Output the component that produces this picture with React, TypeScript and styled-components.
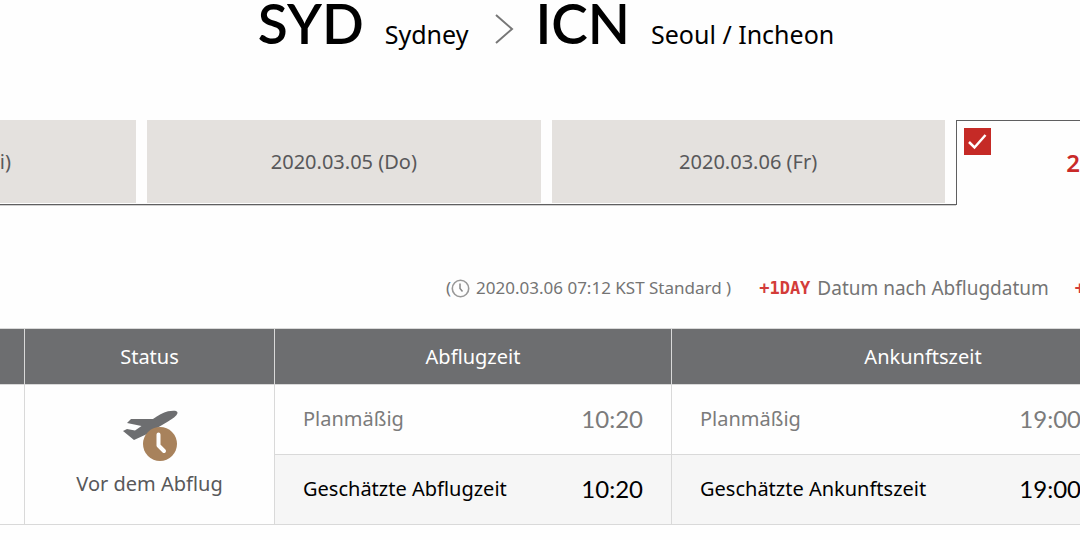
import React from "react";
import styled, { createGlobalStyle } from "styled-components";

const GlobalStyle = createGlobalStyle`
  * { box-sizing: border-box; }
  body {
    margin: 0;
    background: #fefefe;
    color: #000;
    font-family: "Noto Sans", sans-serif;
    font-size: 20px;
    line-height: 28px;
    overflow: hidden;
  }
`;

const Viewport = styled.div`
  overflow: hidden;
`;

const Sheet = styled.main`
  width: calc(100% + 526px);
  margin-left: -257px;
`;

const Route = styled.h1`
  display: flex;
  align-items: baseline;
  justify-content: center;
  margin: 0;
  height: 120px;
  line-height: 46px;
  font-weight: 400;
  white-space: nowrap;
`;

const Code = styled.span`
  font-family: Lato, sans-serif;
  font-size: 55px;
  font-weight: 600;
`;

const City = styled.span`
  margin-left: 21px;
  font-size: 25px;
`;

const Chevron = styled.svg`
  width: 20px;
  height: 30px;
  margin: 0 21px 0 26px;
`;

const Tabs = styled.div`
  display: flex;
  gap: 11px;
  border-bottom: 1px solid #5f5f60;
  box-shadow: 0 1px #d0d0d0;
`;

const Tab = styled.button<{ $active?: boolean }>`
  position: relative;
  flex: 1;
  height: ${(p) => (p.$active ? 85 : 83)}px;
  margin-bottom: ${(p) => (p.$active ? -1 : 1)}px;
  padding: 0;
  border: 1px solid ${(p) => (p.$active ? "#5f5f60" : "#e4e1de")};
  border-bottom: 0;
  background: ${(p) => (p.$active ? "#fefefe" : "#e4e1de")};
  box-shadow: ${(p) => (p.$active ? "0 1px #fefefe" : "none")};
  color: ${(p) => (p.$active ? "#c92a28" : "#58585a")};
  font-family: inherit;
  font-size: ${(p) => (p.$active ? 24 : 20)}px;
  font-weight: ${(p) => (p.$active ? 600 : 400)};
  line-height: 28px;
`;

const Check = styled.svg`
  position: absolute;
  top: 7px;
  left: 7px;
  width: 27px;
  height: 27px;
  background: #c52a26;
`;

const Notes = styled.div`
  display: flex;
  align-items: center;
  justify-content: flex-end;
  margin: 69px 223px 26px 0;
  color: #747474;
  font-size: 19px;
  white-space: nowrap;
`;

const Stamp = styled.span`
  display: flex;
  align-items: center;
  margin-right: 28px;
  font-size: 17px;
`;

const Clock = styled.svg`
  width: 19px;
  height: 19px;
  margin-right: 6px;
`;

const Day = styled.strong`
  font-family: "DejaVu Sans Mono", monospace;
  font-size: 17px;
  color: #d33c39;
`;

const DayText = styled.span`
  margin: 0 26px 0 7px;
`;

const Table = styled.table`
  width: 100%;
  table-layout: fixed;
  border-collapse: collapse;
`;

const Col = styled.col<{ $width?: number }>`
  width: ${(p) => (p.$width ? `${p.$width}px` : "auto")};
`;

const HeadCell = styled.th`
  height: 56px;
  padding: 0;
  border: 1px solid #d9d9d9;
  background: #6d6e70;
  color: #fff;
  font-weight: 400;
`;

const Cell = styled.td<{ $shaded?: boolean }>`
  height: 70px;
  padding: 0;
  border: 1px solid #d9d9d9;
  background: ${(p) => (p.$shaded ? "#f6f6f6" : "#fefefe")};
  color: ${(p) => (p.$shaded ? "#000" : "#7b7b7b")};
`;

const Entry = styled.div<{ $wide?: boolean }>`
  display: flex;
  align-items: center;
  justify-content: space-between;
  padding: 0 ${(p) => (p.$wide ? 93 : 28)}px 2px 28px;
`;

const Time = styled.span`
  font-family: Lato, sans-serif;
  font-size: 24px;
`;

const Status = styled.div`
  display: flex;
  flex-direction: column;
  align-items: center;
  gap: 8px;
  padding-bottom: 2px;
  color: #58585a;
`;

const Plane = styled.svg`
  width: 56px;
  height: 52px;
`;

const times = [
  { label: "Planmäßig", value: "10:20", arrival: "Planmäßig", arrivalValue: "19:00" },
  { label: "Geschätzte Abflugzeit", value: "10:20", arrival: "Geschätzte Ankunftszeit", arrivalValue: "19:00" },
];

export default function App() {
  return (
    <>
      <GlobalStyle />
      <Viewport>
        <Sheet>
          <Route>
            <Code>SYD</Code>
            <City>Sydney</City>
            <Chevron viewBox="0 0 20 30" aria-hidden="true">
              <path d="M2 1L18 15L2 29" fill="none" stroke="#777" strokeWidth="2" />
            </Chevron>
            <Code>ICN</Code>
            <City>Seoul / Incheon</City>
          </Route>

          <Tabs role="tablist">
            <Tab role="tab" aria-selected={false}>2020.03.04 (Mi)</Tab>
            <Tab role="tab" aria-selected={false}>2020.03.05 (Do)</Tab>
            <Tab role="tab" aria-selected={false}>2020.03.06 (Fr)</Tab>
            <Tab role="tab" aria-selected $active>
              <Check viewBox="0 0 27 27" aria-hidden="true">
                <path d="M5 14L10.5 19.5L21.5 7" fill="none" stroke="#fff" strokeWidth="2.5" />
              </Check>
              2020.03.07 (Sa)
            </Tab>
          </Tabs>

          <Notes>
            <Stamp>
              (
              <Clock viewBox="0 0 19 19" aria-hidden="true">
                <circle cx="9.5" cy="9.5" r="8.2" fill="none" stroke="#999" strokeWidth="1.6" />
                <path d="M9 4.5V9.5L11.5 12.5" fill="none" stroke="#888" strokeWidth="1.5" />
              </Clock>
              2020.03.06 07:12 KST Standard )
            </Stamp>
            <Day>+1DAY</Day>
            <DayText>Datum nach Abflugdatum</DayText>
            <Day>+1DAY</Day>
          </Notes>

          <Table>
            <colgroup>
              <Col $width={281} />
              <Col $width={250} />
              <Col $width={397} />
              <Col />
              <Col $width={174} />
            </colgroup>
            <thead>
              <tr>
                <HeadCell />
                <HeadCell>Status</HeadCell>
                <HeadCell>Abflugzeit</HeadCell>
                <HeadCell>Ankunftszeit</HeadCell>
                <HeadCell />
              </tr>
            </thead>
            <tbody>
              {times.map((row, i) => (
                <tr key={row.label}>
                  {i === 0 && (
                    <>
                      <Cell rowSpan={2} />
                      <Cell rowSpan={2}>
                        <Status>
                          <Plane viewBox="0 0 56 52" aria-hidden="true">
                            <path
                              d="M9 9H31C36 5.500 41 2.500 46 1.300C50 .4 56 0 55.500 3C55 6 50 9 46 11.500L24 24.500L12 30L1 21L5 19L13 20.500L19.500 16L5 13Z"
                              fill="#6d6e70"
                            />
                            <circle cx="38" cy="34" r="17" fill="#a8825c" />
                            <path
                              d="M36.500 24.500V35.500L42 41"
                              fill="none"
                              stroke="#fff"
                              strokeWidth="4"
                              strokeLinecap="round"
                              strokeLinejoin="round"
                            />
                          </Plane>
                          Vor dem Abflug
                        </Status>
                      </Cell>
                    </>
                  )}
                  <Cell $shaded={i === 1}>
                    <Entry>
                      {row.label}
                      <Time>{row.value}</Time>
                    </Entry>
                  </Cell>
                  <Cell $shaded={i === 1}>
                    <Entry $wide>
                      {row.arrival}
                      <Time>{row.arrivalValue}</Time>
                    </Entry>
                  </Cell>
                  {i === 0 && <Cell rowSpan={2} />}
                </tr>
              ))}
            </tbody>
          </Table>
        </Sheet>
      </Viewport>
    </>
  );
}
